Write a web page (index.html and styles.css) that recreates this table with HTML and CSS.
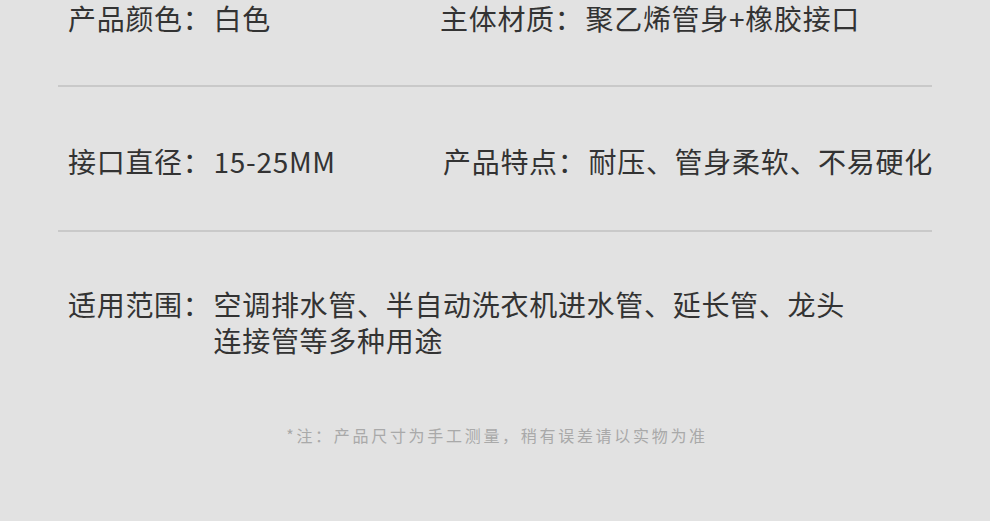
FILE: index.html
```html
<!DOCTYPE html>
<html>
<head>
	<title>产品参数</title>
	<meta name="viewport" content="width=device-width, initial-scale=1">
	<link rel="stylesheet" href="styles.css">
</head>
<body>
	<div class="spec-sheet">
		<div class="spec-row first">
			<div class="spec-item"><span class="label">产品颜色：</span><span class="value">白色</span></div>
			<div class="spec-item"><span class="label">主体材质：</span><span class="value">聚乙烯管身+橡胶接口</span></div>
		</div>
		<div class="spec-row">
			<div class="spec-item"><span class="label">接口直径：</span><span class="value">15-25MM</span></div>
			<div class="spec-item shift"><span class="label">产品特点：</span><span class="value">耐压、管身柔软、不易硬化</span></div>
		</div>
		<div class="spec-row wide">
			<div class="spec-item"><span class="label">适用范围：</span><span class="value">空调排水管、半自动洗衣机进水管、延长管、龙头<br>连接管等多种用途</span></div>
		</div>
		<p class="note">*注：产品尺寸为手工测量，稍有误差请以实物为准</p>
	</div>
</body>
</html>
```

FILE: styles.css
```css
body {
	margin: 0;
	padding: 0;
	font-family: "Noto Sans CJK SC", "Noto Sans", sans-serif;
	background-color: #e2e2e2;
	color: #333;
	height: 521px;
	overflow: hidden;
}
.spec-sheet {
	width: 874px;
	margin-left: 58px;
}
.spec-row {
	display: grid;
	grid-template-columns: 372px 1fr;
	padding: 56px 10px 51px;
	border-top: 2px solid #c9c9c9;
	font-size: 28px;
	line-height: 36px;
	letter-spacing: 0.7px;
}
.spec-row.first {
	padding-top: 0;
	padding-bottom: 49px;
	border-top: none;
}
.spec-row.wide {
	display: block;
	padding-top: 54px;
	padding-bottom: 0;
}
.spec-item {
	display: flex;
	white-space: nowrap;
}
.spec-item.shift {
	padding-left: 3px;
}
.label {
	flex-shrink: 0;
}
.value {
	padding-left: 2px;
}
.note {
	margin: 65px 0 0;
	text-align: center;
	font-size: 16px;
	line-height: 24px;
	letter-spacing: 2.7px;
	color: #a9a9a9;
	padding-left: 4px;
}
```
